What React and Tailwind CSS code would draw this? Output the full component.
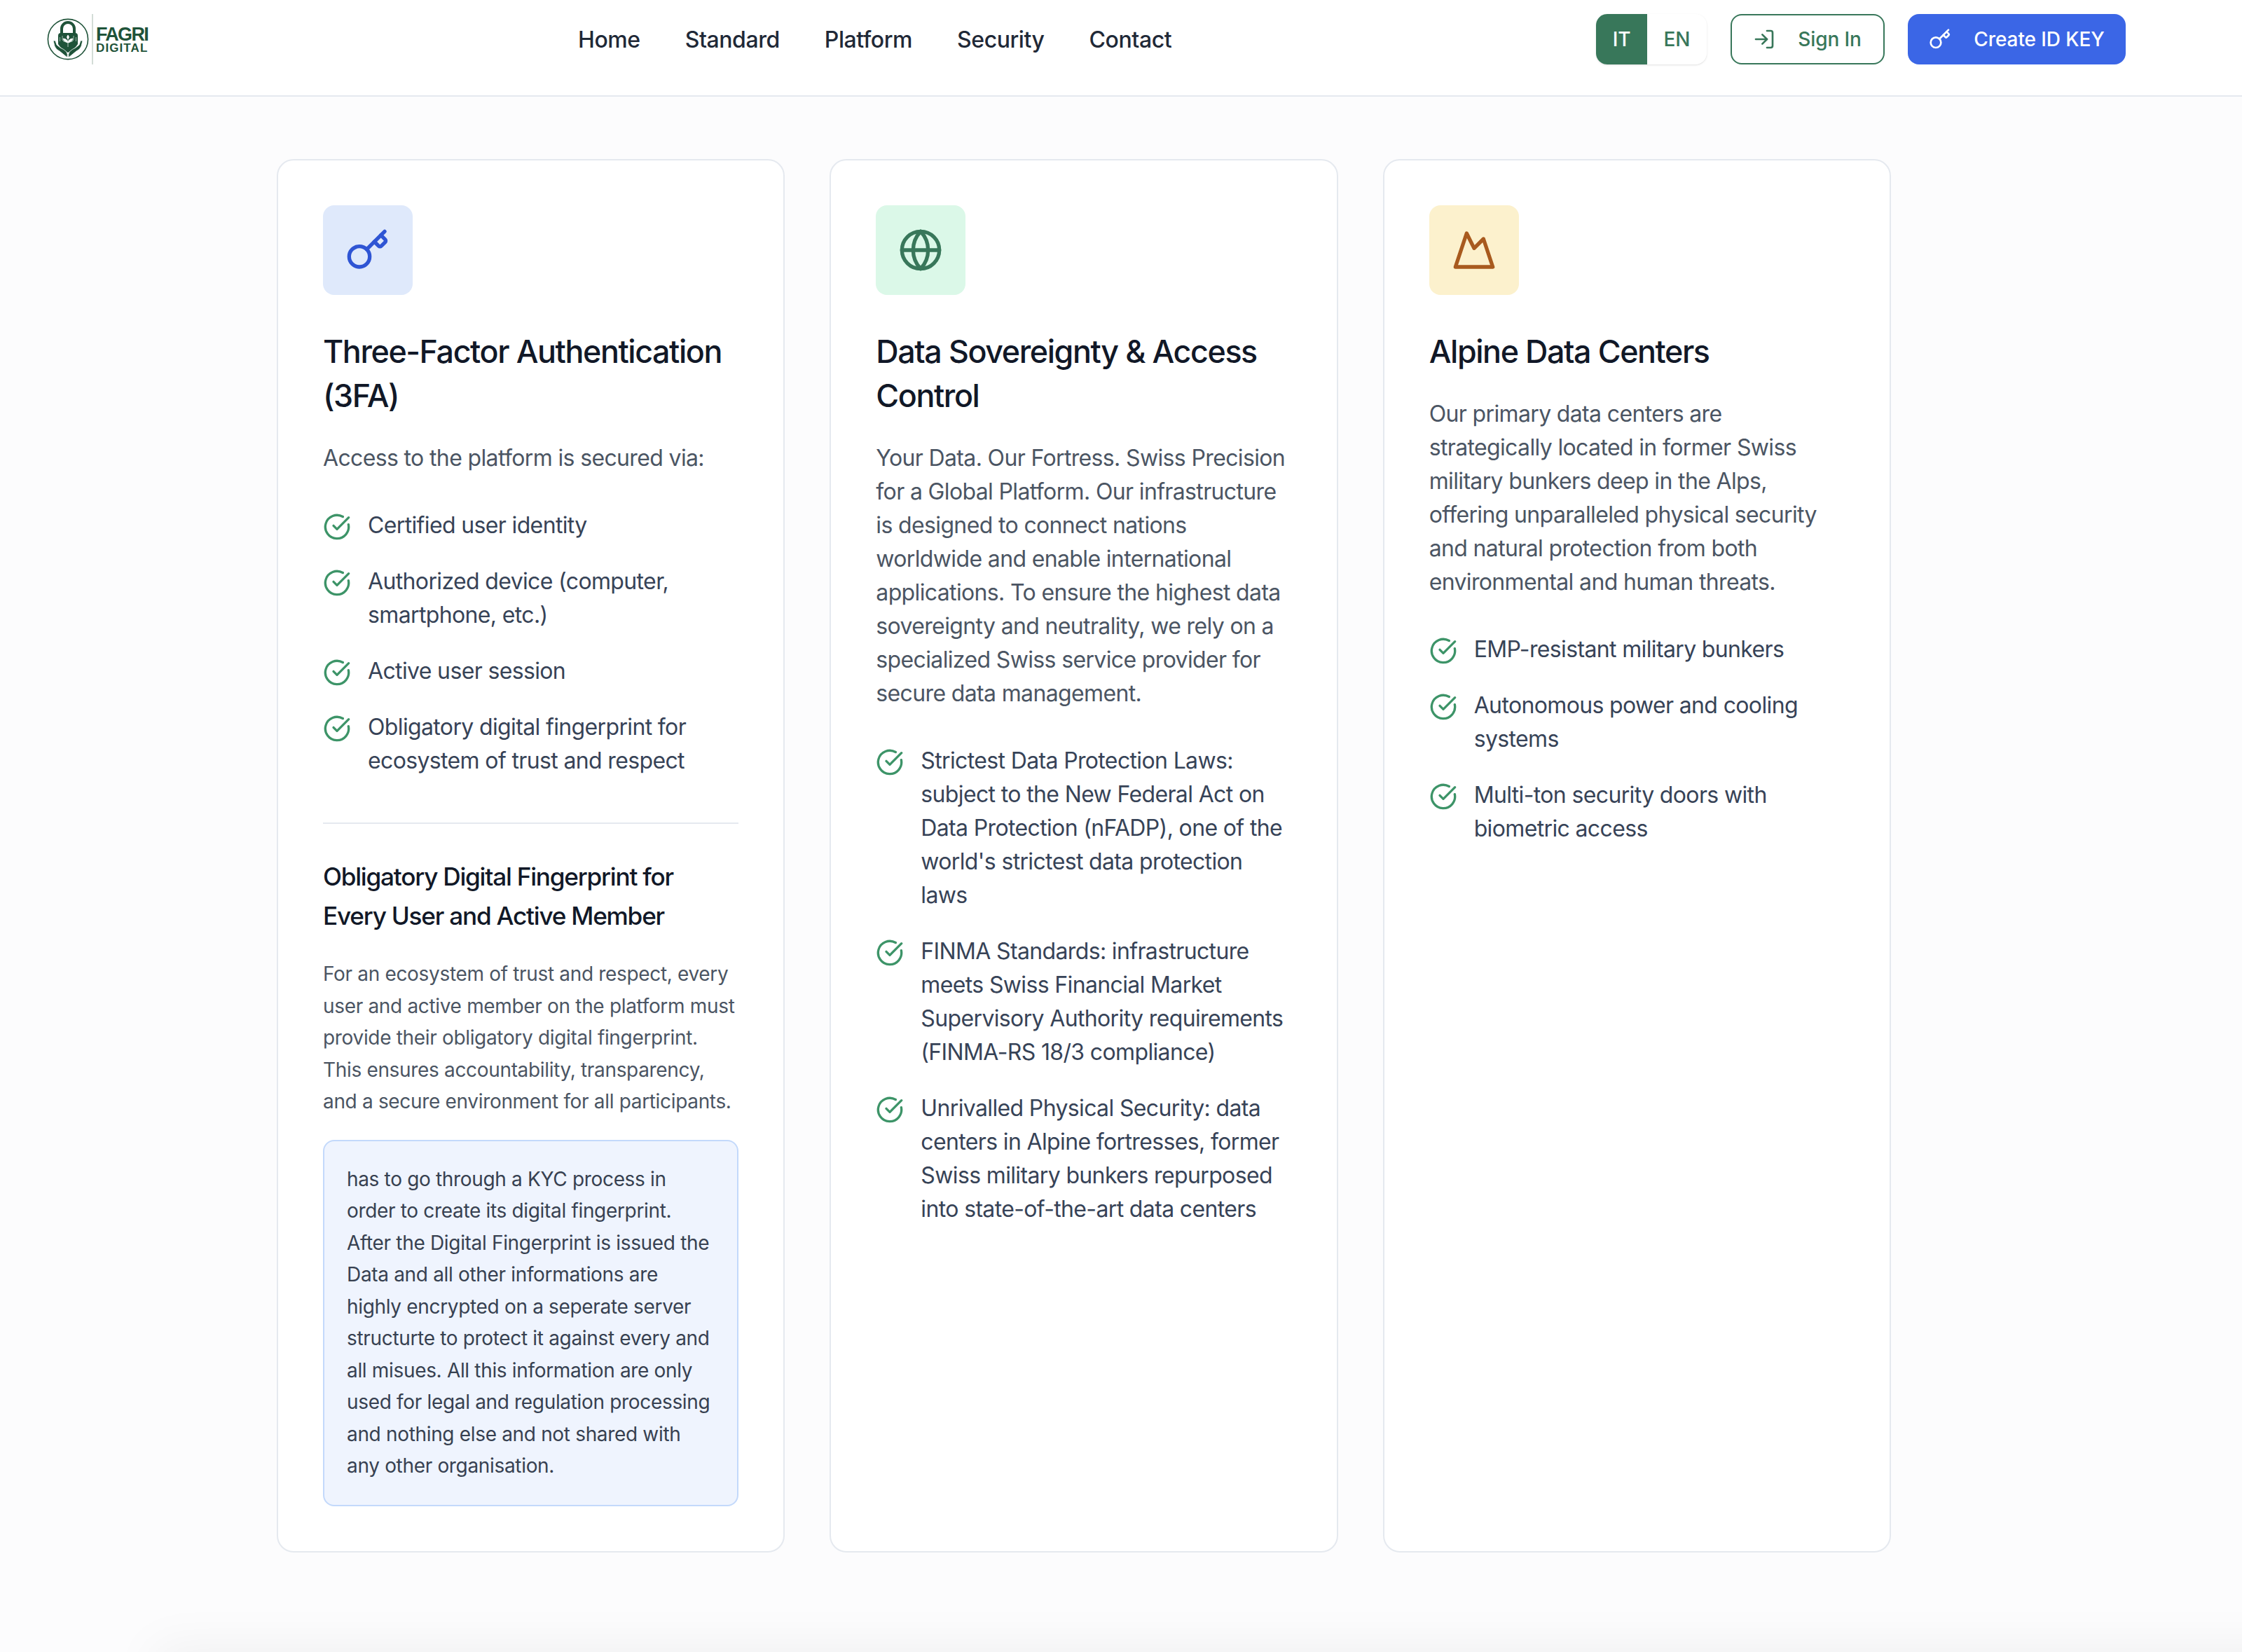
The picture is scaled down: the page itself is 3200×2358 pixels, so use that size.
import React from "react";
import { CircleCheckBig, Globe, Key, LogIn, Mountain } from "lucide-react";

const NAV = ["Home", "Standard", "Platform", "Security", "Contact"];

const Logo = () => (
  <div className="flex items-center h-[72px]">
    <svg width="60" height="60" viewBox="0 0 60 60" className="shrink-0">
      <circle cx="30" cy="30" r="28.6" fill="#fff" stroke="#1f5339" strokeWidth="1.6" />
      <path d="M21 22V15a9 9 0 0 1 18 0v7" fill="none" stroke="#1f5339" strokeWidth="4" />
      <path d="M16 25q0-4 4-4h20q4 0 4 4v12q-5 8-14 12q-9-4-14-12z" fill="#1f5339" />
      <path d="M30 26v15M30 35q-6-1-7-6q6 0 7 6zM30 35q6-1 7-6q-6 0-7 6zM30 30q-3-3 0-6q3 3 0 6z" fill="#fff" stroke="#fff" strokeWidth="0.7" />
      <path d="M22 25v6l3 3M38 25v6l-3 3M18.500 27v6M41.500 27v6" fill="none" stroke="#a9c4b5" strokeWidth="0.9" />
      <path d="M9 32l2 8q2 5 7 7l11 9q1-5-1-8q-4-4-9-6l-5-4-2-6zM51 32l-2 8q-2 5-7 7l-11 9q-1-5 1-8q4-4 9-6l5-4 2-6z" fill="#1f5339" stroke="#fff" strokeWidth="0.8" />
    </svg>
    <div className="w-[2px] h-[72px] bg-[#d3dcd7] ml-[4px] mr-[4px]"></div>
    <div className="flex flex-col text-[#1f5339] font-['Liberation_Sans',sans-serif] font-bold">
      <span className="text-[27px] leading-[24px] tracking-[-1.7px]">FAGRI</span>
      <span className="text-[17px] leading-[15px] tracking-[1.1px]">DIGITAL</span>
    </div>
  </div>
);

const Header = () => (
  <header className="h-[138px] bg-white border-b-2 border-[#e5e9ef] flex items-start relative">
    <div className="ml-[67px] mt-[20px]">
      <Logo />
    </div>
    <nav className="absolute left-[825px] top-[37px] flex gap-[64px] text-[32px] leading-[40px] tracking-[-0.43px] font-medium text-[#1f2937]">
      {NAV.map((item) => (
        <a key={item}>{item}</a>
      ))}
    </nav>
    <div className="absolute left-[2278px] top-[20px] flex gap-[33.5px] text-[28px] tracking-[-0.1px] font-medium">
      <div className="flex h-[72px] rounded-[16px] overflow-hidden bg-white shadow-sm">
        <div className="w-[73px] flex items-center justify-center bg-[#38775a] text-white">IT</div>
        <div className="w-[85px] flex items-center justify-center text-[#38775a]">EN</div>
      </div>
      <div className="w-[220px] h-[72px] rounded-[16px] border-2 border-[#38775a] text-[#38775a] flex items-center justify-center gap-[32px]">
        <LogIn size={32} strokeWidth={2} />
        <span>Sign In</span>
      </div>
      <div className="w-[311px] h-[72px] rounded-[16px] bg-[#3b66e6] text-white flex items-center justify-center gap-[32px]">
        <Key size={32} strokeWidth={2} />
        <span>Create ID KEY</span>
      </div>
    </div>
  </header>
);

const CheckItem = ({ children }) => (
  <li className="flex gap-[24px] text-[#374357]">
    <CircleCheckBig size={40} strokeWidth={2} className="shrink-0 text-[#3d9468] mt-[6px]" />
    <span>{children}</span>
  </li>
);

const Card = ({ icon, iconBox, title, intro, items, children }) => (
  <div className="bg-white border-2 border-[#e5e9ef] rounded-[24px] p-[64px]">
    <div className={`w-[128px] h-[128px] rounded-[16px] flex items-center justify-center ${iconBox}`}>
      {icon}
    </div>
    <h3 className="mt-[50px] text-[44.8px] leading-[63px] font-medium tracking-[-1.4px] text-[#111827]">{title}</h3>
    <p className="mt-[33px] text-[#4b5563]">{intro}</p>
    <ul className="mt-[48px] flex flex-col gap-[32px]">
      {items.map((item) => (
        <CheckItem key={item}>{item}</CheckItem>
      ))}
    </ul>
    {children}
  </div>
);

export default function App() {
  return (
    <div className="relative h-[2358px] bg-[#fcfcfd] font-['Inter',sans-serif] text-[32px] leading-[48px] tracking-[-0.64px] overflow-hidden">
      <Header />
      <main className="ml-[395px] w-[2304px] pt-[89px] grid grid-cols-3 gap-[64px]">
        <Card
          icon={<Key size={64} strokeWidth={2} className="text-[#2f55d4]" />}
          iconBox="bg-[#dfe9fb]"
          title="Three-Factor Authentication (3FA)"
          intro="Access to the platform is secured via:"
          items={[
            "Certified user identity",
            "Authorized device (computer, smartphone, etc.)",
            "Active user session",
            "Obligatory digital fingerprint for ecosystem of trust and respect",
          ]}
        >
          <hr className="mt-[64px] border-t-2 border-[#e5e9ef]" />
          <h4 className="mt-[47px] text-[35.2px] leading-[56px] font-medium tracking-[-1.24px] text-[#111827]">
            Obligatory Digital Fingerprint for Every User and Active Member
          </h4>
          <p className="mt-[33px] text-[28px] leading-[45.5px] tracking-[-0.33px] text-[#4b5563]">
            For an ecosystem of trust and respect, every user and active member on the platform must provide their obligatory digital fingerprint. This ensures accountability, transparency, and a secure environment for all participants.
          </p>
          <div className="mt-[31px] bg-[#eff4fe] border-2 border-[#c3d9fb] rounded-[16px] p-[32px] text-[28px] leading-[45.5px] tracking-[-0.33px] text-[#374151]">
            has to go through a KYC process in order to create its digital fingerprint. After the Digital Fingerprint is issued the Data and all other informations are highly encrypted on a seperate server structurte to protect it against every and all misues. All this information are only used for legal and regulation processing and nothing else and not shared with any other organisation.
          </div>
        </Card>
        <Card
          icon={<Globe size={64} strokeWidth={2} className="text-[#38775a]" />}
          iconBox="bg-[#dbf8e8]"
          title="Data Sovereignty & Access Control"
          intro="Your Data. Our Fortress. Swiss Precision for a Global Platform. Our infrastructure is designed to connect nations worldwide and enable international applications. To ensure the highest data sovereignty and neutrality, we rely on a specialized Swiss service provider for secure data management."
          items={[
            "Strictest Data Protection Laws: subject to the New Federal Act on Data Protection (nFADP), one of the world's strictest data protection laws",
            "FINMA Standards: infrastructure meets Swiss Financial Market Supervisory Authority requirements (FINMA-RS 18/3 compliance)",
            "Unrivalled Physical Security: data centers in Alpine fortresses, former Swiss military bunkers repurposed into state-of-the-art data centers",
          ]}
        />
        <Card
          icon={<Mountain size={64} strokeWidth={2} className="text-[#a85a1e]" />}
          iconBox="bg-[#fcf1cd]"
          title="Alpine Data Centers"
          intro="Our primary data centers are strategically located in former Swiss military bunkers deep in the Alps, offering unparalleled physical security and natural protection from both environmental and human threats."
          items={[
            "EMP-resistant military bunkers",
            "Autonomous power and cooling systems",
            "Multi-ton security doors with biometric access",
          ]}
        />
      </main>
      {/* soft shadow of whatever sits just below the fold */}
      <div className="absolute left-[270px] right-[-100px] top-[2400px] h-[100px] bg-[#f0f0f0] shadow-[0_0_70px_50px_rgba(0,0,0,0.05)]"></div>
    </div>
  );
}
